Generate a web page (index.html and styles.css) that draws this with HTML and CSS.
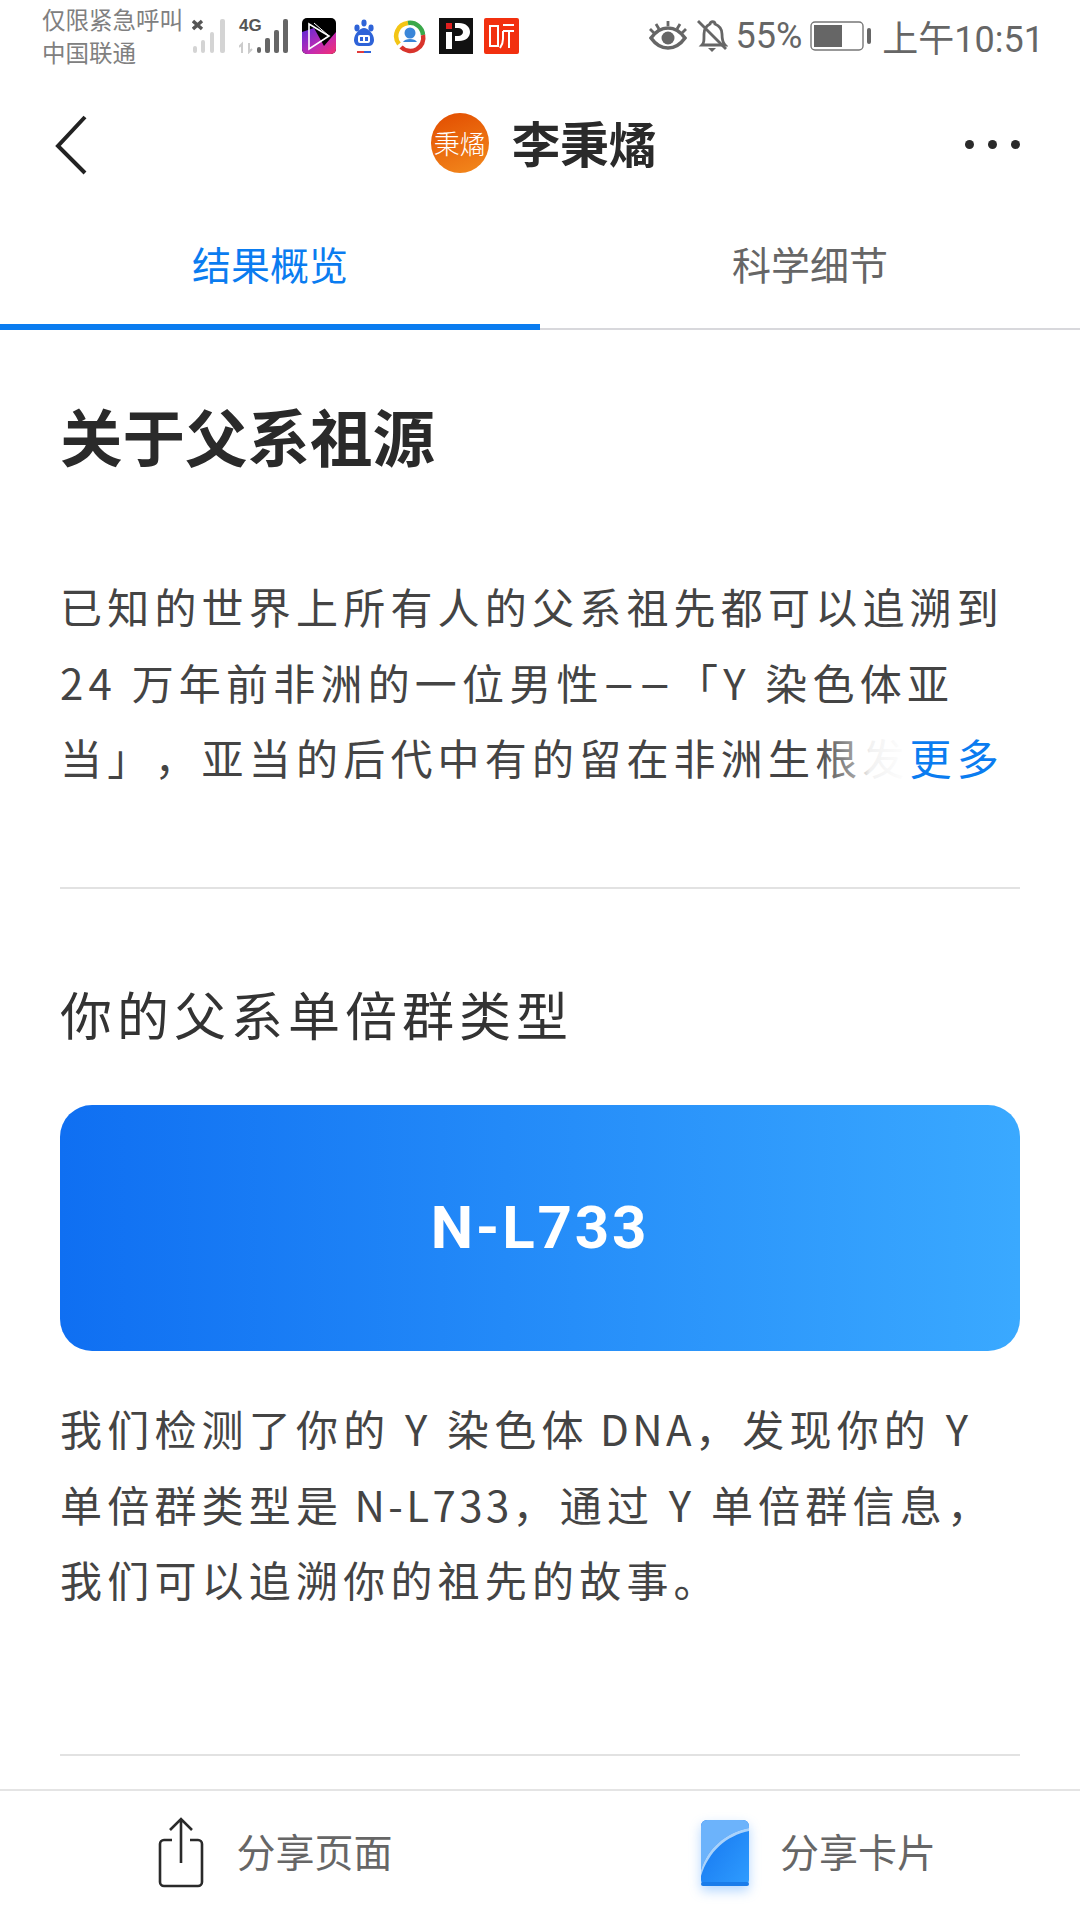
FILE: index.html
```html
<!DOCTYPE html>
<html lang="zh-CN">
<head>
  <meta charset="UTF-8" />
  <title>李秉燏</title>
  <link rel="stylesheet" href="styles.css">
</head>
<body>
  <div class="page">
    <div class="statusbar">
      <div class="carrier">
        <div>仅限紧急呼叫</div>
        <div>中国联通</div>
      </div>
      <div class="status-left">
        <svg width="36" height="36" viewBox="0 0 36 36">
          <path d="M1 3l9 8M10 3l-9 8" stroke="#555" stroke-width="3.4" fill="none"/>
          <g fill="#d4d4d4">
            <rect x="1" y="28" width="4" height="7" rx="2"/>
            <rect x="9" y="22" width="4" height="13" rx="2"/>
            <rect x="18" y="14" width="4" height="21" rx="2"/>
            <rect x="28" y="1" width="5" height="34" rx="2"/>
          </g>
        </svg>
        <div class="sig2">
          <span class="lte">4G</span>
          <svg width="52" height="36" viewBox="0 0 52 36">
            <path d="M3 35v-9l-3 3M10 25v9l3-3" stroke="#ccc" stroke-width="2" fill="none"/>
            <g fill="#666">
              <rect x="18" y="29" width="4" height="6" rx="2"/>
              <rect x="26" y="20" width="5" height="15" rx="2"/>
              <rect x="35" y="12" width="5" height="23" rx="2"/>
              <rect x="44" y="1" width="5" height="34" rx="2"/>
            </g>
          </svg>
        </div>
        <svg width="34" height="36" viewBox="0 0 34 36">
          <defs>
            <linearGradient id="gv" x1="0" y1="0" x2="1" y2="1">
              <stop offset="0" stop-color="#5a2bd8"/>
              <stop offset="0.6" stop-color="#c42bb0"/>
              <stop offset="1" stop-color="#f5306f"/>
            </linearGradient>
          </defs>
          <rect width="34" height="36" rx="5" fill="#000"/>
          <path d="M0 14l12-4 10 18 12-14v17a5 5 0 0 1-5 5H5a5 5 0 0 1-5-5z" fill="url(#gv)"/>
          <path d="M7 6l20 12-20 13z" fill="none" stroke="#fff" stroke-width="1.6"/>
          <path d="M12 5l15 13" stroke="#fff" stroke-width="1" fill="none"/>
        </svg>
        <svg width="34" height="36" viewBox="0 0 34 36">
          <g fill="#2e63d8">
            <ellipse cx="10" cy="10" rx="2.6" ry="3.4"/>
            <ellipse cx="17" cy="5" rx="2.6" ry="3.4"/>
            <ellipse cx="24" cy="10" rx="2.6" ry="3.4"/>
            <path d="M17 10c4 0 10 6 10 12 0 3-2 6-5 6H12c-3 0-5-3-5-6 0-6 6-12 10-12z"/>
          </g>
          <rect x="11" y="17" width="12" height="8" rx="2" fill="#fff"/>
          <rect x="13" y="19" width="3" height="4" fill="#2e63d8"/>
          <rect x="18" y="19" width="3" height="4" fill="#2e63d8"/>
          <rect x="10" y="33" width="7" height="2" fill="#e23b3b"/>
          <rect x="17" y="33" width="7" height="2" fill="#2e63d8"/>
        </svg>
        <svg width="36" height="36" viewBox="0 0 36 36">
          <path d="M7 26A13 13 0 0 1 16 5" stroke="#f3c515" stroke-width="4.5" fill="none"/>
          <path d="M16 5A13 13 0 0 1 31 17" stroke="#3aa84a" stroke-width="4.5" fill="none"/>
          <path d="M31 17A13 13 0 0 1 9 29" stroke="#d8342c" stroke-width="4.5" fill="none"/>
          <circle cx="18" cy="15" r="5.5" fill="#3a86d8"/>
          <path d="M11 24c2-4 12-4 14 0z" fill="#3a86d8"/>
        </svg>
        <svg width="34" height="36" viewBox="0 0 34 36">
          <rect width="34" height="36" fill="#111"/>
          <rect x="7" y="5" width="6" height="6" fill="#e02020"/>
          <rect x="7" y="14" width="6" height="17" fill="#fff"/>
          <path d="M16 5h4c7 0 11 4 11 9s-4 9-11 9h-4v-5h3c3 0 5-2 5-4s-2-4-5-4h-3z" fill="#fff"/>
        </svg>
        <svg width="35" height="36" viewBox="0 0 35 36">
          <rect width="35" height="36" rx="2" fill="#f2300f"/>
          <path d="M6 8h8v20H6zM19 7h11M19 13h11M19 13v8q0 5-3 9M25 13v17" fill="none" stroke="#fff" stroke-width="2"/>
        </svg>
      </div>
      <div class="status-right">
        <svg class="eye" width="38" height="32" viewBox="0 0 38 32">
          <path d="M2 18c5-7 11-10 17-10s12 3 17 10c-5 7-11 10-17 10S7 25 2 18z" fill="none" stroke="#666" stroke-width="3.6"/>
          <circle cx="19" cy="18" r="6.5" fill="#666"/>
          <path d="M19 1v5M7 4l3 5M31 4l-3 5M1 9l4 4M37 9l-4 4" stroke="#666" stroke-width="2.8"/>
        </svg>
        <svg class="bell" width="32" height="34" viewBox="0 0 32 34">
          <path d="M6 26c2-2 2-4 2-11 0-5 2-8 6-10 0-3 5-3 5 0 5 2 7 5 7 10 0 7 1 9 3 11z" fill="none" stroke="#666" stroke-width="2.8"/>
          <path d="M12 29h8l-4 4z" fill="#666"/>
          <path d="M2 2l28 28" stroke="#666" stroke-width="2.8"/>
        </svg>
        <span class="pct">55%</span>
        <svg width="62" height="30" viewBox="0 0 62 30">
          <rect x="1" y="1" width="52" height="28" rx="4" fill="none" stroke="#777" stroke-width="1.4"/>
          <rect x="4" y="4" width="28" height="22" fill="#666"/>
          <rect x="57" y="7" width="4" height="16" rx="2" fill="#666"/>
        </svg>
        <span class="clock">上午10:51</span>
      </div>
    </div>

    <div class="titlebar">
      <svg class="back" width="36" height="60" viewBox="0 0 36 60">
        <path d="M31 2L4 31l27 27" fill="none" stroke="#222" stroke-width="4"/>
      </svg>
      <div class="title-mid">
        <div class="avatar">秉燏</div>
        <div class="title-name">李秉燏</div>
      </div>
      <div class="dots"><i></i><i></i><i></i></div>
    </div>

    <div class="tabs">
      <div class="tab active">结果概览</div>
      <div class="tab">科学细节</div>
    </div>

    <div class="content">
      <h1>关于父系祖源</h1>
      <div class="intro">
        <div class="more-fade"></div>
        <p class="text">已知的世界上所有人的父系祖先都可以追溯到<br>24 万年前非洲的一位男性<span class="dash">——</span>「Y 染色体亚<br>当」，亚当的后代中有的留在非洲生根发<span class="more">更多</span></p>
      </div>
      <div class="divider"></div>
      <h2>你的父系单倍群类型</h2>
      <div class="haplo">N-L733</div>
      <p class="text desc">我们检测了你的 Y 染色体<span class="code"> DNA</span>，发现你的 Y<br>单倍群类型是<span class="code"> N-L733</span>，通过 Y 单倍群信息，<br>我们可以追溯你的祖先的故事。</p>
      <div class="divider last"></div>
    </div>

    <div class="bottombar">
      <div class="share">
        <svg width="48" height="72" viewBox="0 0 48 72">
          <path d="M15 23H7a4 4 0 0 0-4 4v38a4 4 0 0 0 4 4h34a4 4 0 0 0 4-4V27a4 4 0 0 0-4-4h-8" fill="none" stroke="#2a2a2a" stroke-width="2.6"/>
          <path d="M24 46V3M13 13L24 2l11 11" fill="none" stroke="#2a2a2a" stroke-width="2.6"/>
        </svg>
        <span>分享页面</span>
      </div>
      <div class="share share-card">
        <svg class="card-icon" width="48" height="66" viewBox="0 0 48 66">
          <defs>
            <linearGradient id="cardg" x1="0" y1="0" x2="1" y2="1">
              <stop offset="0" stop-color="#1473ee"/>
              <stop offset="1" stop-color="#2f9dff"/>
            </linearGradient>
          </defs>
          <rect width="48" height="66" rx="6" fill="url(#cardg)"/>
          <rect y="62" width="48" height="4" rx="2" fill="#1a7cea"/>
          <path d="M0 50V6a6 6 0 0 1 6-6h36a6 6 0 0 1 6 6v2C24 13 7 28 0 50z" fill="#6cb3fb"/>
          <path d="M0 50C7 28 24 13 48 8v3C25 16 8 31 0 56z" fill="#a9d2fb"/>
        </svg>
        <span>分享卡片</span>
      </div>
    </div>
  </div>
</body>
</html>
```

FILE: styles.css
```css
* {
  box-sizing: border-box;
}
html, body {
  margin: 0;
  padding: 0;
  background: #fff;
}
body {
  font-family: "Noto Sans CJK SC", "Noto Sans", sans-serif;
  color: #333;
  text-spacing-trim: space-all;
}
.page {
  width: 1080px;
  height: 1920px;
  display: flex;
  flex-direction: column;
  overflow: hidden;
}

/* status bar */
.statusbar {
  height: 72px;
  flex: none;
  display: flex;
  align-items: center;
  padding: 0 36px 0 42px;
  color: #666;
}
.carrier {
  width: 150px;
  font-size: 23.5px;
  line-height: 33px;
  color: #808080;
  white-space: nowrap;
}
.status-left {
  display: flex;
  align-items: center;
  gap: 11px;
}
.sig2 {
  position: relative;
  display: flex;
  align-items: center;
}
.lte {
  position: absolute;
  left: 0;
  top: -2px;
  font: bold 17px "Liberation Sans", sans-serif;
  color: #555;
}
.status-right {
  margin-left: auto;
  display: flex;
  align-items: center;
  gap: 10px;
}
.eye {
  margin-right: -1px;
}
.bell {
  margin-right: -2px;
}
.pct {
  font: 36px Roboto, sans-serif;
  color: #666;
  margin-right: -2px;
}
.clock {
  font: 36px Roboto, "Noto Sans CJK SC", sans-serif;
  color: #666;
}

/* title */
.titlebar {
  position: relative;
  height: 138px;
  flex: none;
  display: flex;
  align-items: center;
  justify-content: center;
  padding: 3px 0 0 8px;
}
.back {
  position: absolute;
  left: 54px;
  top: 43px;
}
.title-mid {
  display: flex;
  align-items: center;
  gap: 23px;
}
.avatar {
  width: 58px;
  height: 60px;
  border-radius: 50%;
  background: linear-gradient(160deg, #e24c00, #f38a1d);
  color: #fff;
  font-size: 26px;
  font-weight: 300;
  white-space: nowrap;
  display: flex;
  align-items: center;
  justify-content: center;
}
.title-name {
  font-size: 48.5px;
  font-weight: 700;
  color: #2a2a2a;
  margin-top: -2px;
}
.dots {
  position: absolute;
  right: 60px;
  top: 68px;
  display: flex;
  gap: 14px;
}
.dots i {
  width: 9px;
  height: 9px;
  border-radius: 50%;
  background: #2a2a2a;
}

/* tabs */
.tabs {
  flex: none;
  height: 120px;
  display: flex;
  border-bottom: 2px solid #d8d8dc;
}
.tab {
  width: 540px;
  height: 120px;
  padding-top: 28px;
  text-align: center;
  font-size: 39px;
  line-height: 50px;
  color: #666;
}
.tab.active {
  color: #0a7cf0;
  border-bottom: 6px solid #0a7cf0;
}

/* content */
.content {
  flex: 1;
  padding: 0 60px;
  overflow: hidden;
}
h1 {
  margin: 65px 0 0;
  font-size: 62.5px;
  line-height: 80px;
  font-weight: 700;
  color: #2a2a2a;
}
.text {
  margin: 0;
  font-size: 42px;
  line-height: 75.5px;
  letter-spacing: 5.2px;
  color: #444;
}
.dash {
  font-family: Roboto, sans-serif;
  font-size: 38px;
  line-height: 0;
  letter-spacing: 6.5px;
}
.code {
  word-spacing: -1.5px;
  letter-spacing: 3.4px;
}
.intro {
  position: relative;
  margin-top: 93px;
  height: 227px;
  overflow: hidden;
}
/* fades the last words of the collapsed paragraph */
.more-fade {
  position: absolute;
  right: 110px;
  bottom: 0;
  width: 95px;
  height: 76px;
  z-index: 1;
  background: linear-gradient(90deg, rgba(255,255,255,0), rgba(255,255,255,.5) 42%, rgba(255,255,255,.93) 58%, #fff);
}
.more {
  position: relative;
  z-index: 2;
  color: #0a7cf0;
}
.divider {
  height: 2px;
  background: #e2e2e2;
  margin-top: 92px;
}
h2 {
  margin: 90px 0 0;
  font-size: 52px;
  line-height: 70px;
  font-weight: 400;
  letter-spacing: 5px;
  color: #333;
}
.haplo {
  margin-top: 56px;
  height: 246px;
  border-radius: 32px;
  background: linear-gradient(90deg, #0f6ff2, #3aa9ff);
  color: #fff;
  font: 700 60px/246px Roboto, sans-serif;
  letter-spacing: 2.8px;
  text-align: center;
}
.desc {
  margin-top: 39px;
}
.divider.last {
  margin-top: 137px;
}

/* bottom bar */
.bottombar {
  flex: none;
  height: 131px;
  display: flex;
  border-top: 2px solid #e4e4e4;
  background: #fff;
  padding-bottom: 6px;
}
.share {
  width: 540px;
  display: flex;
  align-items: center;
  justify-content: center;
  gap: 31px;
  padding-left: 10px;
  font-size: 39px;
  color: #666;
}
.share span {
  margin-top: -6px;
}
.share-card {
  padding-left: 17px;
}
.card-icon {
  filter: drop-shadow(0 5px 6px rgba(40,140,255,0.35));
}
```
